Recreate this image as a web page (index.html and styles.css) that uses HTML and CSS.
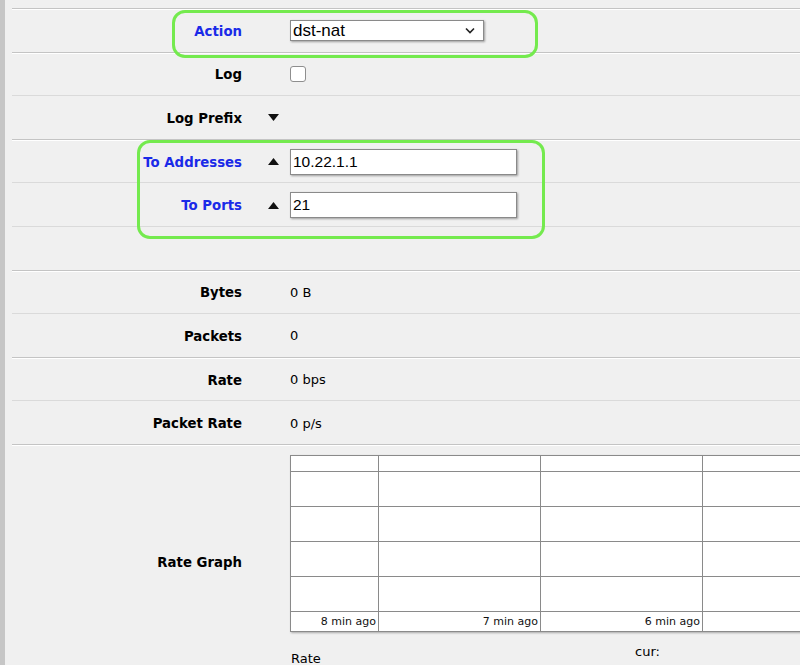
FILE: index.html
```html
<!DOCTYPE html>
<html>
<head>
<meta charset="utf-8">
<link rel="stylesheet" href="styles.css">
</head>
<body>
<div class="page">
  <div class="top-spacer"></div>

  <div class="row group">
    <div class="label link">Action</div>
    <div class="arrow"></div>
    <div class="value">
      <div class="select"><span>dst-nat</span>
        <svg class="chev" width="10" height="7" viewBox="0 0 10 7"><path d="M1 1.5 L5 5.5 L9 1.5" fill="none" stroke="#222" stroke-width="1.6"/></svg>
      </div>
    </div>
  </div>

  <div class="row group">
    <div class="label">Log</div>
    <div class="arrow"></div>
    <div class="value"><div class="checkbox"></div></div>
  </div>

  <div class="row">
    <div class="label">Log Prefix</div>
    <div class="arrow"><svg width="11" height="7" viewBox="0 0 11 7"><polygon points="0,0 11,0 5.5,7" fill="#111"/></svg></div>
    <div class="value"></div>
  </div>

  <div class="row group">
    <div class="label link">To Addresses</div>
    <div class="arrow"><svg width="11" height="7" viewBox="0 0 11 7"><polygon points="0,7 11,7 5.5,0" fill="#111"/></svg></div>
    <div class="value"><div class="input">10.22.1.1</div></div>
  </div>

  <div class="row">
    <div class="label link">To Ports</div>
    <div class="arrow"><svg width="11" height="7" viewBox="0 0 11 7"><polygon points="0,7 11,7 5.5,0" fill="#111"/></svg></div>
    <div class="value"><div class="input">21</div></div>
  </div>

  <div class="row"></div>

  <div class="row group">
    <div class="label">Bytes</div>
    <div class="arrow"></div>
    <div class="value text">0 B</div>
  </div>

  <div class="row">
    <div class="label">Packets</div>
    <div class="arrow"></div>
    <div class="value text">0</div>
  </div>

  <div class="row group">
    <div class="label">Rate</div>
    <div class="arrow"></div>
    <div class="value text">0 bps</div>
  </div>

  <div class="row">
    <div class="label">Packet Rate</div>
    <div class="arrow"></div>
    <div class="value text">0 p/s</div>
  </div>

  <div class="row group graph-row">
    <div class="label">Rate Graph</div>
    <div class="arrow"></div>
    <div class="value graph-cell">
      <div class="graph">
        <div class="c"></div><div class="c"></div><div class="c"></div><div class="c"></div>
        <div class="c"></div><div class="c"></div><div class="c"></div><div class="c"></div>
        <div class="c"></div><div class="c"></div><div class="c"></div><div class="c"></div>
        <div class="c"></div><div class="c"></div><div class="c"></div><div class="c"></div>
        <div class="c"></div><div class="c"></div><div class="c"></div><div class="c"></div>
        <div class="c t">8 min ago</div><div class="c t">7 min ago</div><div class="c t">6 min ago</div><div class="c t"></div>
      </div>
      <div class="legend">
        <span class="leg-rate">Rate</span>
        <span class="leg-cur">cur:</span>
      </div>
    </div>
  </div>

  <div class="hl hl-action"></div>
  <div class="hl hl-to"></div>
</div>
</body>
</html>
```

FILE: styles.css
```css
html, body {
  margin: 0;
  padding: 0;
  overflow: hidden;
  background: #f0f0f0;
}

.page {
  position: relative;
  border-left: 5px solid #c6c6c6;
  padding-left: 7px;
  min-height: 700px;
  font-family: "DejaVu Sans", Verdana, sans-serif;
  color: #000;
}

.top-spacer {
  height: 8px;
}

.row {
  display: grid;
  grid-template-columns: 230px 48px 1fr;
  align-items: center;
  height: 43.6px;
  box-sizing: border-box;
  border-top: 1px solid #dadada;
}

.row.group {
  border-top: 1px solid #c4c4c4;
  box-shadow: inset 0 1px 0 #ffffff;
}

.label {
  text-align: right;
  font-weight: bold;
  font-size: 13.3px;
  padding-top: 2px;
}

.label.link {
  color: #1a2ae8;
}

.arrow {
  padding-left: 26px;
  display: flex;
  align-items: center;
  padding-top: 1px;
}

.value {
  display: flex;
  align-items: center;
  padding-top: 1px;
}

.value.text {
  font-size: 13px;
}

.select {
  width: 194px;
  height: 21px;
  box-sizing: border-box;
  background: #fff;
  border: 1px solid #8a8a8a;
  box-shadow: 1px 1px 2px rgba(0, 0, 0, 0.35);
  display: flex;
  align-items: center;
  justify-content: space-between;
  padding: 0 8px 0 2px;
  font-family: "Liberation Sans", Arial, sans-serif;
  font-size: 17px;
}

.checkbox {
  width: 16px;
  height: 16px;
  box-sizing: border-box;
  background: #fff;
  border: 1px solid #8e8e8e;
  border-radius: 3px;
}

.input {
  width: 227px;
  height: 26px;
  box-sizing: border-box;
  background: #fff;
  border: 1px solid #8a8a8a;
  box-shadow: 1px 1px 2px rgba(0, 0, 0, 0.35);
  padding: 0 2px;
  display: flex;
  align-items: center;
  font-family: "Liberation Sans", Arial, sans-serif;
  font-size: 15.5px;
}

.graph-row {
  height: 234px;
}

.graph-cell {
  align-self: start;
  flex-direction: column;
  align-items: flex-start;
  padding-top: 10px;
}

.graph {
  display: grid;
  grid-template-columns: 87px 161px 161px 161px;
  grid-template-rows: 15px 34px 34px 34px 34px 19px;
  gap: 1px;
  padding: 1px;
  background: #8a8a8a;
  box-shadow: 1px 1px 2px rgba(0, 0, 0, 0.3);
}

.c {
  background: #fff;
}

.c.t {
  font-size: 11px;
  text-align: right;
  padding-right: 2px;
  line-height: 19px;
  color: #111;
}

.legend {
  position: relative;
  width: 500px;
  height: 40px;
  font-size: 13px;
}

.leg-rate {
  position: absolute;
  left: 1px;
  top: 19px;
}

.leg-cur {
  position: absolute;
  left: 345px;
  top: 12px;
}

.hl {
  position: absolute;
  border: 3px solid #74ea4e;
  border-radius: 13px;
  box-sizing: border-box;
}

.hl-action {
  left: 167px;
  top: 10px;
  width: 366px;
  height: 48px;
}

.hl-to {
  left: 132px;
  top: 140px;
  width: 408px;
  height: 99px;
}
```
